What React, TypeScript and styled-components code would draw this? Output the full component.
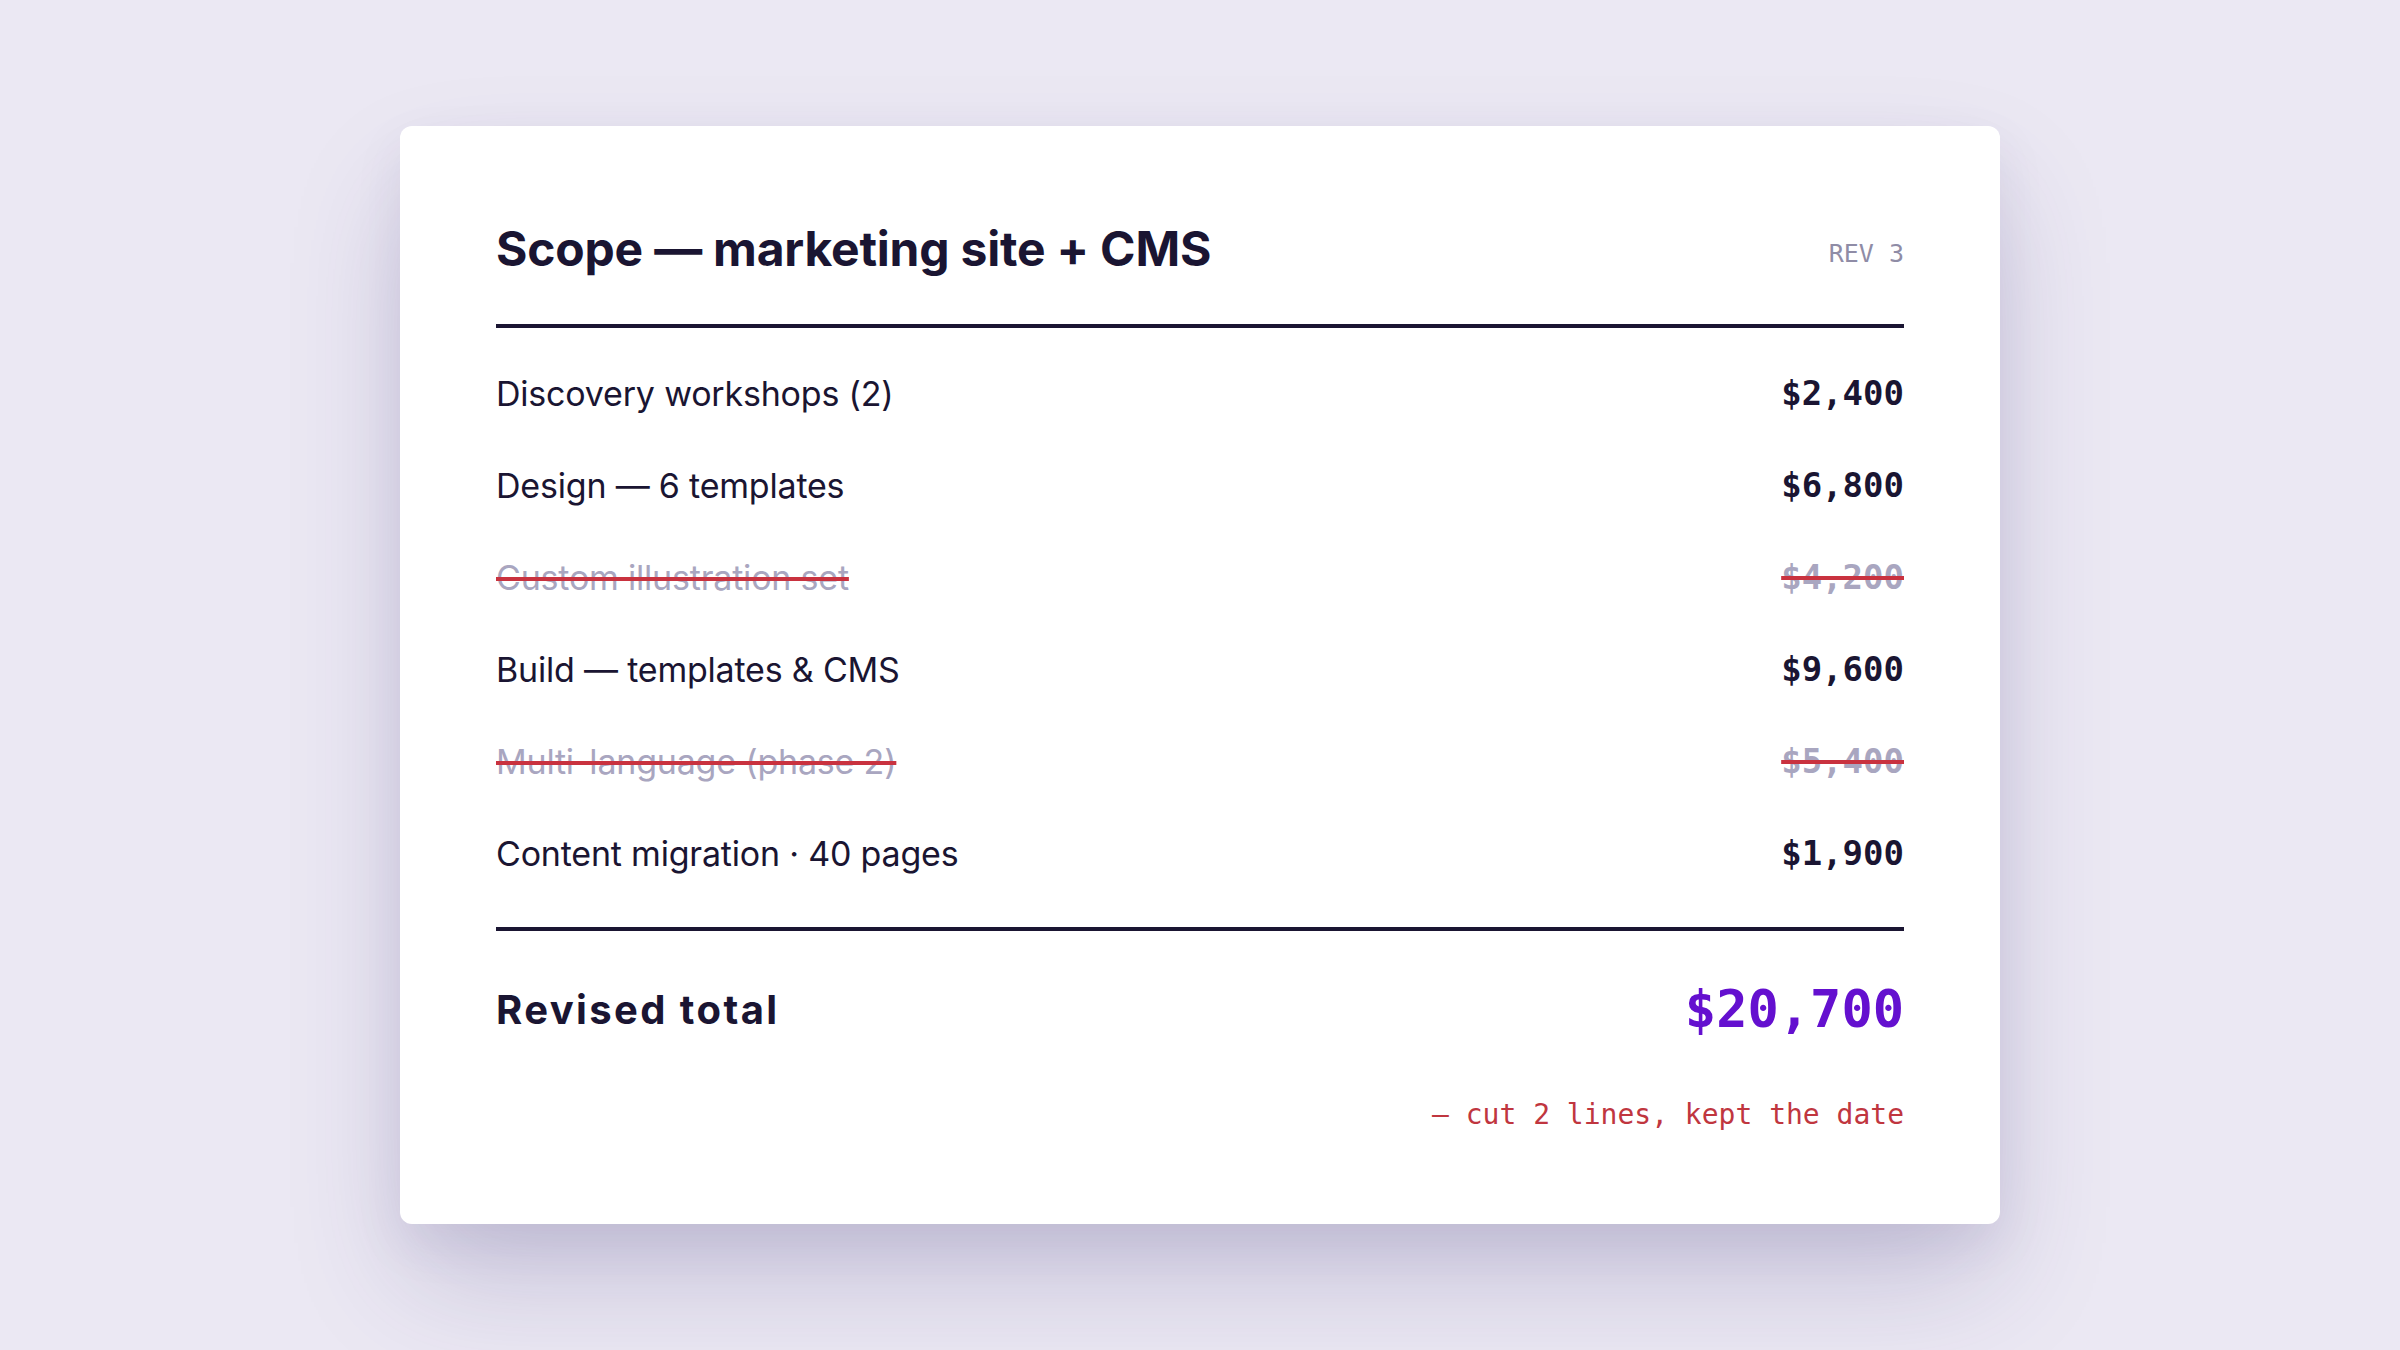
import React from "react";
import styled, { createGlobalStyle } from "styled-components";

const GlobalStyle = createGlobalStyle`
  html, body { margin: 0; padding: 0; }
  body {
    background: #ebe8f3;
    font-family: Inter, "Noto Sans", sans-serif;
    -webkit-font-smoothing: antialiased;
  }
`;

const Page = styled.div`
  width: 2400px;
  height: 1350px;
  display: flex;
  align-items: center;
  justify-content: center;
  background: #ebe8f3;
`;

const Card = styled.section`
  width: 1600px;
  box-sizing: border-box;
  padding: 94px 96px 92px;
  background: #ffffff;
  border-radius: 12px;
  box-shadow: 0 60px 120px -10px rgba(60, 50, 120, 0.22),
    0 20px 50px rgba(60, 50, 120, 0.08);
  display: flex;
  flex-direction: column;
`;

const Header = styled.header`
  display: flex;
  align-items: center;
  justify-content: space-between;
  height: 58px;
  margin-bottom: 46px;
`;

const Title = styled.h1`
  margin: 0;
  font-family: Inter, sans-serif;
  font-weight: 700;
  font-size: 48px;
  line-height: 58px;
  letter-spacing: -0.2px;
  color: #1a1532;
`;

const Rev = styled.span`
  padding-top: 9px;
  font-family: "DejaVu Sans Mono", "Liberation Mono", monospace;
  font-size: 25px;
  color: #8f8ca6;
`;

const Rule = styled.hr`
  margin: 0;
  border: none;
  height: 4px;
  background: #1a1532;
`;

const List = styled.div`
  display: flex;
  flex-direction: column;
  padding: 19px 0 28px;
`;

const Row = styled.div<{ $cut?: boolean }>`
  height: 92px;
  display: flex;
  align-items: center;
  justify-content: space-between;
  color: ${(p) => (p.$cut ? "#a9a6c0" : "#1a1532")};
`;

const strike = `
  text-decoration: line-through;
  text-decoration-color: #c9323f;
  text-decoration-thickness: 4px;
`;

const Label = styled.span<{ $cut?: boolean }>`
  font-family: Inter, sans-serif;
  font-size: 34px;
  font-weight: 400;
  letter-spacing: -0.2px;
  ${(p) => (p.$cut ? strike : "")}
`;

const Price = styled.span<{ $cut?: boolean }>`
  font-family: "DejaVu Sans Mono", "Liberation Mono", monospace;
  font-size: 34px;
  font-weight: 700;
  ${(p) => (p.$cut ? strike : "")}
`;

const TotalRow = styled.div`
  display: flex;
  align-items: center;
  justify-content: space-between;
  height: 80px;
  margin-top: 38px;
`;

const TotalLabel = styled.span`
  font-family: Inter, sans-serif;
  font-weight: 700;
  font-size: 40px;
  letter-spacing: 2.4px;
  color: #1a1532;
`;

const TotalValue = styled.span`
  font-family: "DejaVu Sans Mono", "Liberation Mono", monospace;
  font-weight: 700;
  font-size: 52px;
  color: #6410cf;
`;

const Note = styled.p`
  margin: 49px 0 0;
  text-align: right;
  font-family: "DejaVu Sans Mono", "Liberation Mono", monospace;
  font-size: 28px;
  line-height: 34px;
  color: #c0363f;
`;

type Item = { label: string; price: string; cut?: boolean };

const items: Item[] = [
  { label: "Discovery workshops (2)", price: "$2,400" },
  { label: "Design — 6 templates", price: "$6,800" },
  { label: "Custom illustration set", price: "$4,200", cut: true },
  { label: "Build — templates & CMS", price: "$9,600" },
  { label: "Multi-language (phase 2)", price: "$5,400", cut: true },
  { label: "Content migration · 40 pages", price: "$1,900" },
];

export default function App() {
  return (
    <>
      <GlobalStyle />
      <Page>
        <Card>
          <Header>
            <Title>Scope — marketing site + CMS</Title>
            <Rev>REV 3</Rev>
          </Header>
          <Rule />
          <List>
            {items.map((it) => (
              <Row key={it.label} $cut={it.cut}>
                <Label $cut={it.cut}>{it.label}</Label>
                <Price $cut={it.cut}>{it.price}</Price>
              </Row>
            ))}
          </List>
          <Rule />
          <TotalRow>
            <TotalLabel>Revised total</TotalLabel>
            <TotalValue>$20,700</TotalValue>
          </TotalRow>
          <Note>— cut 2 lines, kept the date</Note>
        </Card>
      </Page>
    </>
  );
}
